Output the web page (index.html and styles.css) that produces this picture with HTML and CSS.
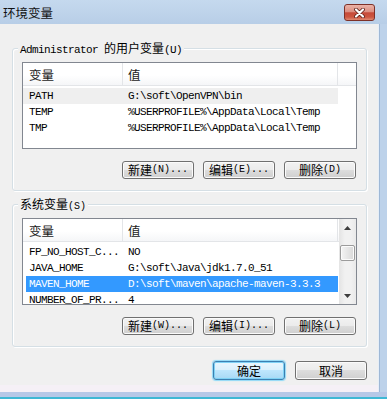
FILE: index.html
```html
<!DOCTYPE html>
<html lang="zh-CN">
<head>
<meta charset="utf-8">
<title>环境变量</title>
<link rel="stylesheet" href="styles.css">
</head>
<body>
<div class="window">
  <div class="titlebar">
    <span class="title">环境变量</span>
    <div class="close">
      <svg width="13" height="10" viewBox="0 0 13 10">
        <path d="M3 1.5 L10 8.5 M10 1.5 L3 8.5" stroke="#5b1c15" stroke-width="3.8" stroke-linecap="round" fill="none"/>
        <path d="M3 1.5 L10 8.5 M10 1.5 L3 8.5" stroke="#ffffff" stroke-width="2.2" stroke-linecap="round" fill="none"/>
      </svg>
    </div>
  </div>
  <div class="frame-row">
    <div class="client">
      <section class="group">
        <div class="group-title"><span class="mono">Administrator </span>的用户变量<span class="mono">(U)</span></div>
        <div class="list">
          <div class="list-body">
            <div class="header">
              <div class="hc c1">变量</div>
              <div class="hc c2">值</div>
              <div class="hc c3"></div>
            </div>
            <div class="row inactive"><span class="c1">PATH</span><span class="c2">G:\soft\OpenVPN\bin</span></div>
            <div class="row"><span class="c1">TEMP</span><span class="c2">%USERPROFILE%\AppData\Local\Temp</span></div>
            <div class="row"><span class="c1">TMP</span><span class="c2">%USERPROFILE%\AppData\Local\Temp</span></div>
          </div>
        </div>
        <div class="btn-row">
          <button class="btn">新建<span class="key">(N)...</span></button>
          <button class="btn">编辑<span class="key">(E)...</span></button>
          <button class="btn">删除<span class="key">(D)</span></button>
        </div>
      </section>
      <section class="group">
        <div class="group-title">系统变量<span class="key">(S)</span></div>
        <div class="list">
          <div class="list-body">
            <div class="header">
              <div class="hc c1">变量</div>
              <div class="hc c2">值</div>
              <div class="hc c3"></div>
            </div>
            <div class="row"><span class="c1">FP_NO_HOST_C...</span><span class="c2">NO</span></div>
            <div class="row"><span class="c1">JAVA_HOME</span><span class="c2">G:\soft\Java\jdk1.7.0_51</span></div>
            <div class="row selected"><span class="c1">MAVEN_HOME</span><span class="c2">D:\soft\maven\apache-maven-3.3.3</span></div>
            <div class="row"><span class="c1">NUMBER_OF_PR...</span><span class="c2">4</span></div>
          </div>
          <div class="scrollbar">
            <div class="sb-btn"><svg width="7" height="4" viewBox="0 0 7 4"><polygon points="3.5,0 7,4 0,4" fill="#3d3d3d"/></svg></div>
            <div class="thumb"></div>
            <div class="sb-spacer"></div>
            <div class="sb-btn"><svg width="7" height="4" viewBox="0 0 7 4"><polygon points="0,0 7,0 3.5,4" fill="#3d3d3d"/></svg></div>
          </div>
        </div>
        <div class="btn-row">
          <button class="btn">新建<span class="key">(W)...</span></button>
          <button class="btn">编辑<span class="key">(I)...</span></button>
          <button class="btn">删除<span class="key">(L)</span></button>
        </div>
      </section>
      <div class="dialog-btns">
        <button class="btn big default">确定</button>
        <button class="btn big">取消</button>
      </div>
    </div>
    <div class="frame-right"></div>
  </div>
  <div class="frame-bottom"></div>
</div>
</body>
</html>
```
FILE: styles.css
```css
html, body {
  margin: 0;
  padding: 0;
}
body {
  width: 387px;
  height: 399px;
  overflow: hidden;
  font-family: "Noto Sans CJK SC", "Liberation Sans", sans-serif;
  font-size: 12px;
  color: #000;
}
.window {
  width: 387px;
  height: 399px;
  display: flex;
  flex-direction: column;
  background: #bed3ea;
}
.titlebar {
  height: 24px;
  flex: none;
  display: flex;
  justify-content: space-between;
  align-items: flex-start;
  background: linear-gradient(#c5d9ee, #b8cee7);
}
.title {
  padding: 4px 0 0 3px;
  line-height: 18px;
  font-size: 12.5px;
  color: #121212;
}
.close {
  margin: 4px 12px 0 0;
  width: 31px;
  height: 17px;
  box-sizing: border-box;
  border: 1px solid #7d3128;
  border-radius: 3px;
  background: linear-gradient(#ebb3a8 0%, #dc8f81 45%, #c64a39 52%, #cc5640 80%, #e08a72 100%);
  display: flex;
  align-items: center;
  justify-content: center;
}
.frame-row {
  display: flex;
  height: 368px;
  flex: none;
}
.client {
  width: 378px;
  flex: none;
  box-sizing: border-box;
  padding: 24px 0 0 12px;
  background: linear-gradient(#f0f0f0 361px, #f5f0f6 361px);
}
.frame-right {
  flex: 1;
  background: linear-gradient(to right, #e6eef7 0 1px, #9fb8d6 1px 2px, #bdd2ea 2px);
}
.frame-bottom {
  height: 7px;
  flex: none;
  background: linear-gradient(#b6c8e7 0 5px, #3eb8d4 5px);
}

.group {
  width: 355px;
  box-sizing: border-box;
  border: 1px solid #d5dfe5;
  border-radius: 3px;
  box-shadow: inset 1px 1px 0 #fff, 1px 1px 0 #fff;
  padding: 0 9px 11px;
  display: flex;
  flex-direction: column;
}
.group + .group {
  margin-top: 13px;
}
.group-title {
  align-self: flex-start;
  margin: -9px 0 0 -4px;
  padding: 0 2px;
  height: 16px;
  line-height: 16px;
  background: #f0f0f0;
  white-space: nowrap;
}
.mono {
  font-family: "Liberation Mono", monospace;
  font-size: 11px;
  letter-spacing: -0.6px;
}
.key {
  font-family: "Liberation Mono", monospace;
  font-size: 10px;
}

.list {
  margin-top: 6px;
  height: 87px;
  box-sizing: border-box;
  border: 1px solid #828790;
  background: #fff;
  display: flex;
}
.list-body {
  flex: 1;
  overflow: hidden;
}
.header {
  height: 23px;
  box-sizing: border-box;
  border-bottom: 1px solid #e3e5e8;
  display: flex;
  background: linear-gradient(#fff 55%, #f5f6f8);
  margin-bottom: 2px;
}
.hc {
  box-sizing: border-box;
  padding-top: 2px;
  line-height: 19px;
  font-size: 12.5px;
  color: #1a1a1a;
}
.hc.c1 {
  width: 100px;
  padding-left: 6px;
  border-right: 1px solid #e3e5e8;
}
.hc.c2 {
  width: 215px;
  padding-left: 5px;
  border-right: 1px solid #e3e5e8;
}
.hc.c3 {
  flex: 1;
}
.row {
  display: flex;
  width: 315px;
  height: 16px;
  line-height: 16px;
  font-family: "Liberation Mono", monospace;
  font-size: 11px;
  letter-spacing: -0.6px;
  white-space: nowrap;
}
.row .c1 {
  width: 100px;
  flex: none;
  box-sizing: border-box;
  padding-left: 6px;
  overflow: hidden;
}
.row .c2 {
  padding-left: 5px;
}
.row.inactive {
  background: #efefef;
}
.row.selected {
  background: linear-gradient(to right, transparent 3px, #3399ff 3px);
  color: #fff;
}

.scrollbar {
  width: 17px;
  flex: none;
  display: flex;
  flex-direction: column;
  background: linear-gradient(to right, #e4e4e4, #f1f1f1 35%, #f1f1f1 70%, #e9e9e9);
}
.sb-btn {
  height: 17px;
  flex: none;
  display: flex;
  align-items: center;
  justify-content: center;
}
.thumb {
  margin: 9px 1px 0;
  height: 16px;
  box-sizing: border-box;
  border: 1px solid #9b9b9b;
  border-radius: 2px;
  background: linear-gradient(to right, #f4f4f4, #e6e6e6 50%, #d9d9d9);
  box-shadow: inset 0 0 0 1px #fbfbfb;
}
.sb-spacer {
  flex: 1;
}

.btn-row {
  display: flex;
  justify-content: flex-end;
  gap: 9px;
  margin: 12px 1px 0 0;
}
.btn {
  width: 72px;
  height: 18px;
  box-sizing: border-box;
  margin: 0;
  padding: 0;
  border: 1px solid #707070;
  border-radius: 3px;
  background: linear-gradient(#f2f2f2 0%, #ebebeb 50%, #dddddd 50%, #cfcfcf 100%);
  box-shadow: inset 0 0 0 1px #fbfbfb;
  display: flex;
  align-items: center;
  justify-content: center;
  font-family: "Noto Sans CJK SC", "Liberation Sans", sans-serif;
  font-size: 12px;
  line-height: 14px;
  color: #000;
}
.btn.big {
  height: 19px;
}
.btn.default {
  border-color: #3c7fb1;
  background: linear-gradient(#eaf6fd 0%, #d9f0fc 50%, #bee6fd 50%, #a7d9f5 100%);
  box-shadow: inset 0 0 0 1px #7fd2f5, 0 0 1px 1px #8fd9f7;
}
.dialog-btns {
  width: 355px;
  display: flex;
  justify-content: flex-end;
  gap: 10px;
  margin-top: 14px;
}
```
